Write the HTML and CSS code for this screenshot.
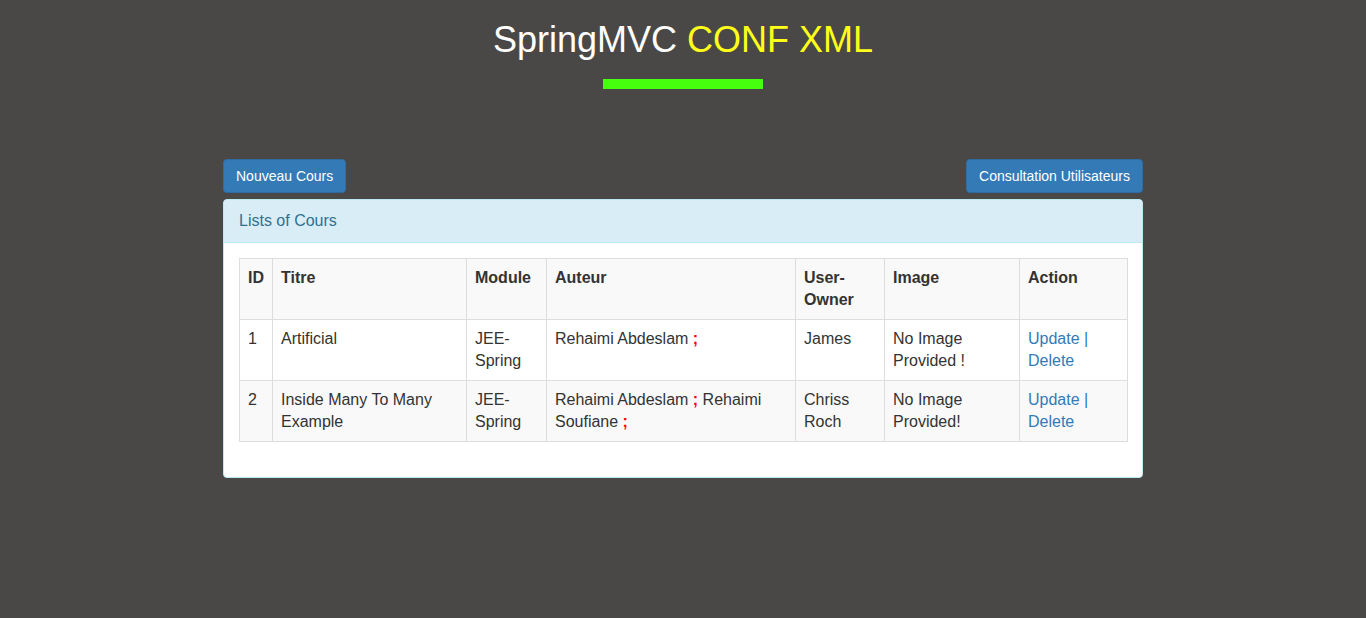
FILE: index.html
```html
<!DOCTYPE html>
<html lang="fr">
<head>
<meta charset="utf-8">
<title>SpringMVC CONF XML</title>
<link rel="stylesheet" href="styles.css">
</head>
<body>
<header class="page-header">
  <h1 class="title">SpringMVC <span class="title-accent">CONF XML</span></h1>
  <div class="title-bar"></div>
</header>
<main class="container">
  <div class="toolbar">
    <a class="btn" href="#">Nouveau Cours</a>
    <a class="btn" href="#">Consultation Utilisateurs</a>
  </div>
  <section class="panel">
    <div class="panel-heading">Lists of Cours</div>
    <div class="panel-body">
      <table class="table">
        <colgroup>
          <col class="c-id"><col class="c-titre"><col class="c-module"><col class="c-auteur"><col class="c-user"><col class="c-image"><col class="c-action">
        </colgroup>
        <tr class="row-head">
          <th>ID</th><th>Titre</th><th>Module</th><th>Auteur</th><th>User-Owner</th><th>Image</th><th>Action</th>
        </tr>
        <tr class="row-white">
          <td>1</td><td>Artificial</td><td>JEE-Spring</td>
          <td>Rehaimi Abdeslam <span class="sep">;</span></td>
          <td>James</td><td>No Image Provided !</td>
          <td><a href="#">Update</a> <a href="#">|</a> <a href="#">Delete</a></td>
        </tr>
        <tr class="row-gray">
          <td>2</td><td>Inside Many To Many Example</td><td>JEE-Spring</td>
          <td>Rehaimi Abdeslam <span class="sep">;</span> Rehaimi Soufiane <span class="sep">;</span></td>
          <td>Chriss Roch</td><td>No Image Provided!</td>
          <td><a href="#">Update</a> <a href="#">|</a> <a href="#">Delete</a></td>
        </tr>
      </table>
    </div>
  </section>
</main>
</body>
</html>
```

FILE: styles.css
```css
* { box-sizing: border-box; }
html, body {
  margin: 0;
  padding: 0;
}
body {
  background: #4a4846;
  font-family: "Liberation Sans", Arial, Helvetica, sans-serif;
  font-size: 16px;
  line-height: 22px;
  color: #333;
  min-height: 618px;
}
.page-header {
  display: flex;
  flex-direction: column;
  align-items: center;
  padding-top: 20px;
}
.title {
  margin: 0;
  font-size: 36px;
  line-height: 40px;
  font-weight: normal;
  color: #fff;
}
.title-accent { color: #ffff19; }
.title-bar {
  width: 160px;
  height: 10px;
  background: #45ff0f;
  margin-top: 19px;
}
.container {
  width: 920px;
  margin: 70px auto 0;
}
.toolbar {
  display: flex;
  justify-content: space-between;
  margin-bottom: 6px;
}
.btn {
  display: inline-block;
  font-size: 14px;
  line-height: 20px;
  padding: 6px 12px;
  color: #fff;
  background: #337ab7;
  border: 1px solid #2e6da4;
  border-radius: 4px;
  text-decoration: none;
}
.panel {
  background: #fff;
  border: 1px solid #bce8f1;
  border-radius: 4px;
}
.panel-heading {
  background: #d9edf7;
  color: #31708f;
  border-bottom: 1px solid #bce8f1;
  padding: 10px 15px;
  border-radius: 3px 3px 0 0;
}
.panel-body { padding: 15px; }
.table {
  width: 888px;
  border-collapse: collapse;
  table-layout: fixed;
  margin-bottom: 20px;
}
.c-id { width: 33px; }
.c-titre { width: 194px; }
.c-module { width: 80px; }
.c-auteur { width: 249px; }
.c-user { width: 89px; }
.c-image { width: 135px; }
.c-action { width: 108px; }
.table th, .table td {
  border: 1px solid #ddd;
  padding: 8px;
  text-align: left;
  vertical-align: top;
}
.table th { font-weight: bold; }
.row-head, .row-gray { background: #f9f9f9; }
.row-white { background: #fff; }
.sep { color: #f00; font-weight: bold; }
.table a { color: #337ab7; text-decoration: none; }
```
